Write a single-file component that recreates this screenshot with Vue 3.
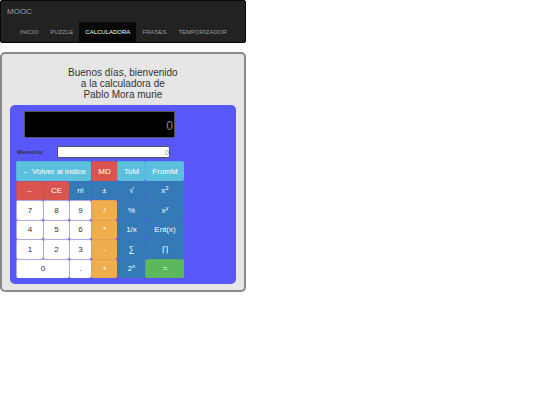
<script setup>
import { ref } from 'vue'

const links = ['INICIO', 'PUZZLE', 'CALCULADORA', 'FRASES', 'TEMPORIZADOR']
const active = 'CALCULADORA'
const display = ref('0')
const memory = ref('0')

const keys = [
  { t: '← Volver al indice', c: 'info', span: 3 },
  { t: 'MD', c: 'danger' },
  { t: 'ToM', c: 'info' },
  { t: 'FromM', c: 'info' },
  { t: '←', c: 'danger' },
  { t: 'CE', c: 'danger' },
  { t: 'n!', c: 'primary' },
  { t: '±', c: 'primary' },
  { t: '√', c: 'primary' },
  { t: 'x', sup: '2', c: 'primary' },
  { t: '7', c: 'plain' },
  { t: '8', c: 'plain' },
  { t: '9', c: 'plain' },
  { t: '/', c: 'warning' },
  { t: '%', c: 'primary' },
  { t: 'x', sup: 'y', c: 'primary' },
  { t: '4', c: 'plain' },
  { t: '5', c: 'plain' },
  { t: '6', c: 'plain' },
  { t: '*', c: 'warning' },
  { t: '1/x', c: 'primary' },
  { t: 'Ent(x)', c: 'primary' },
  { t: '1', c: 'plain' },
  { t: '2', c: 'plain' },
  { t: '3', c: 'plain' },
  { t: '-', c: 'warning' },
  { t: '∑', c: 'primary' },
  { t: '∏', c: 'primary' },
  { t: '0', c: 'plain', span: 2 },
  { t: '.', c: 'plain' },
  { t: '+', c: 'warning' },
  { t: '2', sup: 'x', c: 'primary' },
  { t: '=', c: 'success' }
]
</script>

<template>
  <div class="page">
    <nav class="navbar">
      <a class="brand" href="#">MOOC</a>
      <ul class="links">
        <li v-for="l in links" :key="l">
          <a href="#" :class="{ active: l === active }">{{ l }}</a>
        </li>
      </ul>
    </nav>
    <main class="card">
      <h1>Buenos días, bienvenido<br />a la calculadora de<br />Pablo Mora murie</h1>
      <section class="calc">
        <input v-model="display" class="display" type="text" aria-label="Pantalla" />
        <div class="memory">
          <label for="memory">Memória:</label>
          <input id="memory" v-model="memory" type="text" />
        </div>
        <div class="keys">
          <button
            v-for="(k, i) in keys"
            :key="i"
            type="button"
            :class="[k.c, k.span ? 'span' + k.span : '']"
          >{{ k.t }}<sup v-if="k.sup">{{ k.sup }}</sup></button>
        </div>
      </section>
    </main>
  </div>
</template>

<style>
body {
  background: #fff;
}
</style>

<style scoped>
.page {
  width: 45.5%;
  font-family: "Liberation Sans", Arial, sans-serif;
  color: #333;
}
.page * {
  box-sizing: border-box;
}
.navbar {
  background: #222;
  border: 1px solid #080808;
  border-radius: 2px;
  margin-bottom: 9px;
}
.brand {
  display: block;
  padding: 0 6px;
  font-size: 8px;
  line-height: 21px;
  color: #9d9d9d;
  text-decoration: none;
}
.links {
  display: flex;
  list-style: none;
  margin: 0;
  padding: 0 12px;
}
.links a {
  display: block;
  padding: 1px 6px 0 7px;
  font-size: 6px;
  line-height: 19px;
  color: #9d9d9d;
  text-decoration: none;
}
.links li:nth-child(n + 2) a {
  padding-left: 6px;
}
.links a.active {
  background: #080808;
  color: #fff;
}
.card {
  background: #e6e6e6;
  border: 2px solid #888;
  border-radius: 5px;
  padding: 13px 8px 6px;
}
h1 {
  margin: 0 0 5px;
  font-size: 10px;
  font-weight: 400;
  line-height: 11px;
  text-align: center;
}
.calc {
  background: #5858fa;
  border-radius: 5px;
  padding: 6px;
}
input {
  display: block;
  font-family: inherit;
  text-align: right;
  color: #888;
}
.display {
  width: 151px;
  height: 27px;
  margin-left: 8px;
  padding: 2px 1px 0;
  font-size: 12px;
  background: #000;
  border: 1px solid #555;
  border-radius: 2px;
}
.memory {
  display: flex;
  align-items: center;
  margin: 8px 0 3px;
}
.memory label {
  width: 41px;
  padding-left: 1px;
  font-size: 6px;
  font-weight: 700;
}
.memory input {
  width: 113px;
  height: 12px;
  padding: 0;
  font-size: 7px;
  background: #fff;
  border: 1px solid #555;
  border-radius: 2px;
}
.keys {
  display: grid;
  grid-template-columns: 27px 26px 22px 26px 28px 39px;
  grid-template-rows: repeat(6, 1fr);
  height: 117px;
}
button {
  margin: 0;
  padding: 1px 0 0;
  min-width: 0;
  min-height: 0;
  font-family: inherit;
  font-size: 8px;
  line-height: 10px;
  white-space: nowrap;
  color: #fff;
  border: 1px solid transparent;
  border-width: 1px 0 0 1px;
  border-radius: 2px;
}
sup {
  font-size: 6px;
  line-height: 0;
  vertical-align: 3px;
}
.span2 {
  grid-column: span 2;
}
.span3 {
  grid-column: span 3;
}
.plain {
  background: #fff;
  border-color: #aaaadc;
  color: #333;
}
.info {
  background: #5bc0de;
  border-color: #50b4dd;
}
.danger {
  background: #d9534f;
  border-color: #bd4c68;
}
.primary {
  background: #337ab7;
  border-color: #3973bc;
}
.warning {
  background: #f0ad4e;
  border-color: #dfa056;
}
.success {
  background: #5cb85c;
  border-color: #54ae62;
}
</style>
